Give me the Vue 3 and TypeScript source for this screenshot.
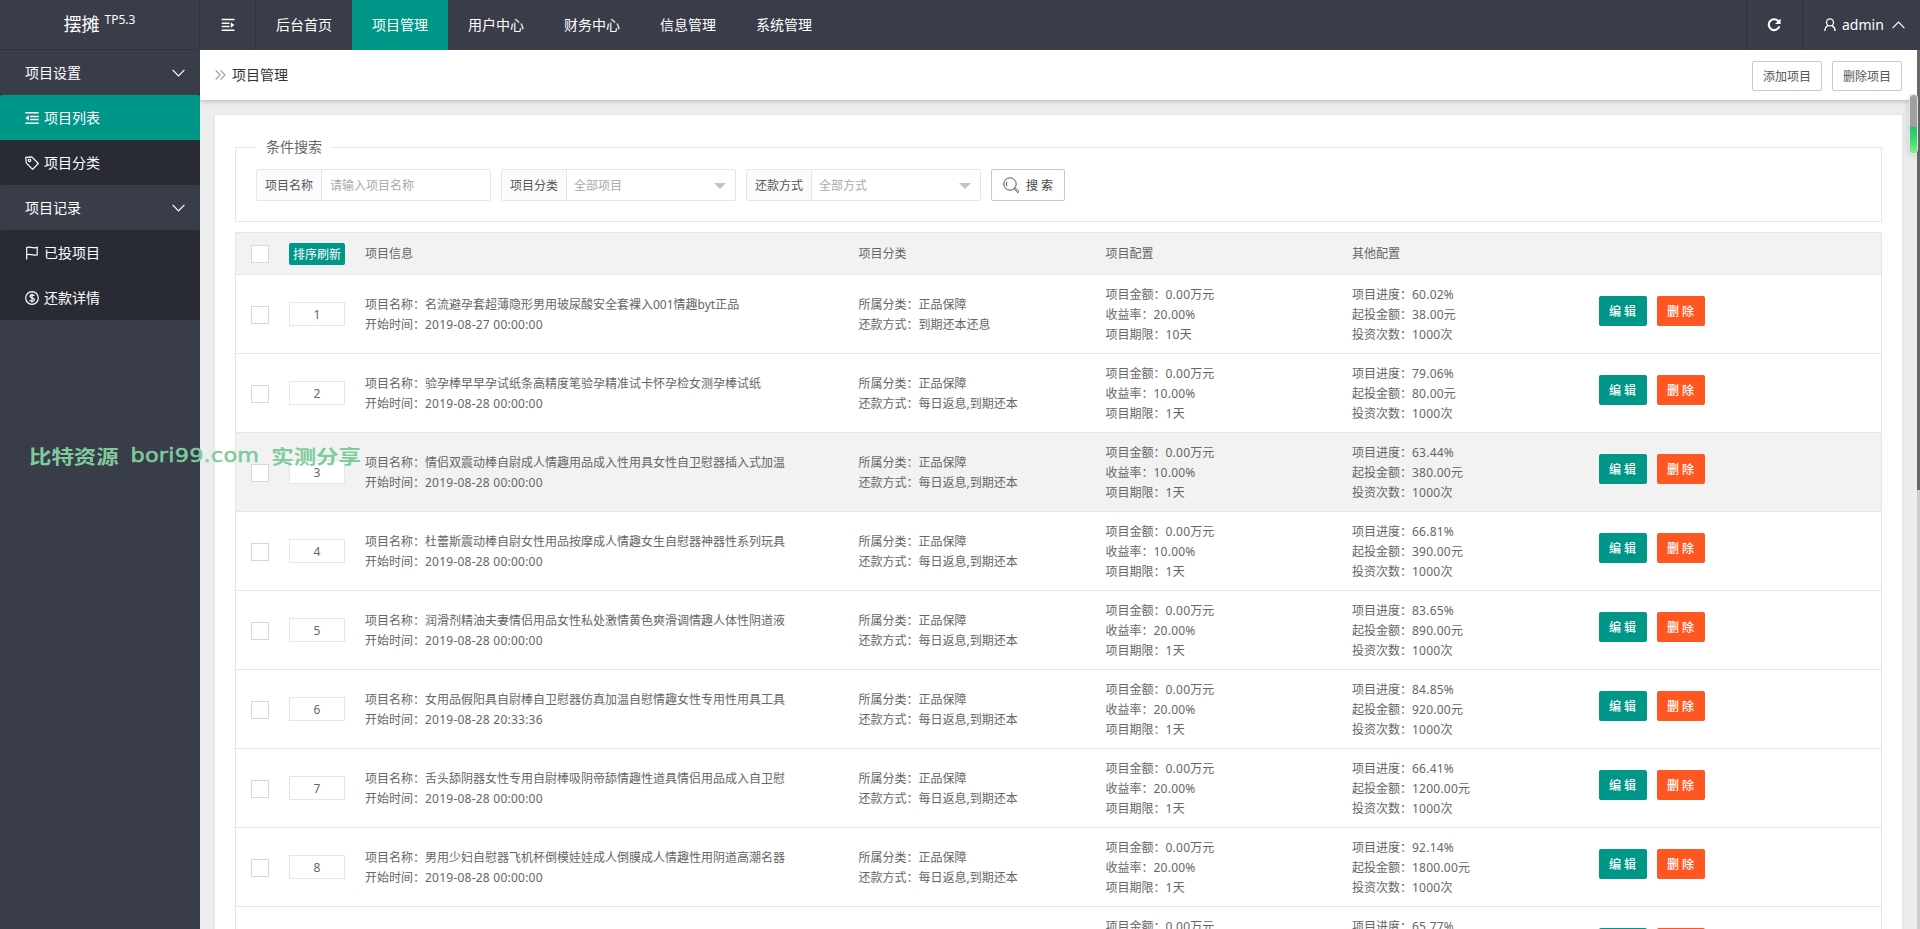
<script setup lang="ts">
interface MenuItem {
  label: string
  icon: 'list' | 'tag' | 'flag' | 'dollar'
  active?: boolean
}

interface MenuGroup {
  title: string
  items: MenuItem[]
}

interface Project {
  sort: number
  name: string
  start: string
  category: string
  repay: string
  amount: string
  rate: string
  term: string
  progress: string
  minimum: string
  times: string
  hover?: boolean
}

const navItems: string[] = ['后台首页', '项目管理', '用户中心', '财务中心', '信息管理', '系统管理']
const activeNav = '项目管理'

const groups: MenuGroup[] = [
  {
    title: '项目设置',
    items: [
      { label: '项目列表', icon: 'list', active: true },
      { label: '项目分类', icon: 'tag' },
    ],
  },
  {
    title: '项目记录',
    items: [
      { label: '已投项目', icon: 'flag' },
      { label: '还款详情', icon: 'dollar' },
    ],
  },
]

const selects = [
  { label: '项目分类', value: '全部项目' },
  { label: '还款方式', value: '全部方式' },
]

function project(
  sort: number,
  name: string,
  rate: string,
  progress: string,
  minimum: string,
  extra: Partial<Project> = {},
): Project {
  return {
    sort,
    name,
    rate,
    progress,
    minimum,
    start: '2019-08-28 00:00:00',
    category: '正品保障',
    repay: '每日返息,到期还本',
    amount: '0.00',
    term: '1',
    times: '1000',
    ...extra,
  }
}

const projects: Project[] = [
  project(1, '名流避孕套超薄隐形男用玻尿酸安全套裸入001情趣byt正品', '20.00%', '60.02%', '38.00', {
    start: '2019-08-27 00:00:00',
    repay: '到期还本还息',
    term: '10',
  }),
  project(2, '验孕棒早早孕试纸条高精度笔验孕精准试卡怀孕检女测孕棒试纸', '10.00%', '79.06%', '80.00'),
  project(3, '情侣双震动棒自尉成人情趣用品成入性用具女性自卫慰器插入式加温', '10.00%', '63.44%', '380.00', { hover: true }),
  project(4, '杜蕾斯震动棒自尉女性用品按摩成人情趣女生自慰器神器性系列玩具', '10.00%', '66.81%', '390.00'),
  project(5, '润滑剂精油夫妻情侣用品女性私处激情黄色爽滑调情趣人体性阴道液', '20.00%', '83.65%', '890.00'),
  project(6, '女用品假阳具自尉棒自卫慰器仿真加温自慰情趣女性专用性用具工具', '20.00%', '84.85%', '920.00', {
    start: '2019-08-28 20:33:36',
  }),
  project(7, '舌头舔阴器女性专用自尉棒吸阴帝舔情趣性道具情侣用品成入自卫慰', '20.00%', '66.41%', '1200.00'),
  project(8, '男用少妇自慰器飞机杯倒模娃娃成人倒膜成人情趣性用阴道高潮名器', '20.00%', '92.14%', '1800.00'),
]
</script>

<template>
  <div class="admin">
    <header class="topbar">
      <div class="logo">摆摊<sup>TP5.3</sup></div>
      <div class="cell">
        <svg width="14" height="14" viewBox="0 0 14 14" fill="none" stroke="#fff" stroke-width="1.5">
          <path d="M.7 1.500h12.800M.7 5.300h7.800M.7 8.600h7.800M.7 12.300h12.800" />
          <path d="M9.800 4.200 13.400 7 9.800 9.800z" fill="#fff" stroke="none" />
        </svg>
      </div>
      <nav class="nav">
        <a v-for="item in navItems" :key="item" :class="{ active: item === activeNav }">{{ item }}</a>
      </nav>
      <div class="cell refresh">
        <svg width="14" height="14" viewBox="0 0 14 14" fill="none" stroke="#fff" stroke-width="2">
          <path d="M11.600 3.600A5.400 5.400 0 1 0 12.300 8.400" />
          <path d="M13.600.6v5.500H8z" fill="#fff" stroke="none" />
        </svg>
      </div>
      <div class="user">
        <svg width="12" height="14" viewBox="0 0 12 14" fill="none" stroke="#fff" stroke-width="1.300">
          <circle cx="6" cy="4.400" r="3.500" />
          <path d="M4.300 7.400C2.400 8.300 .9 10 .8 13M7.700 7.400C9.600 8.300 10.900 9.600 11.200 13" />
        </svg>
        <span>admin</span>
        <svg class="caret" width="13" height="8" viewBox="0 0 13 8" fill="none" stroke="#fff" stroke-width="1.200">
          <path d="M.6 7.200 6.500 1.200l5.900 6" />
        </svg>
      </div>
    </header>

    <div class="body">
      <aside class="side">
        <section v-for="group in groups" :key="group.title">
          <div class="group-title">
            <span>{{ group.title }}</span>
            <svg width="13" height="8" viewBox="0 0 13 8" fill="none" stroke="#fff" stroke-width="1.200">
              <path d="M.6.8l5.900 6 5.900-6" />
            </svg>
          </div>
          <div class="group-list">
            <a v-for="item in group.items" :key="item.label" :class="{ active: item.active }">
              <svg width="14" height="14" viewBox="0 0 14 14" fill="none" stroke="#fff" stroke-width="1.200">
                <template v-if="item.icon === 'list'">
                  <path d="M.3 1.700h13.400M5 5.500h8.700M5 8.600h8.700M.3 12.300h13.400" stroke-width="1.500" />
                  <path d="M4 4.200.4 7 4 9.800z" fill="#fff" stroke="none" />
                </template>
                <template v-else-if="item.icon === 'tag'">
                  <path d="M.8 1.300 6.800.8l6.500 6.700-5.700 5.800L1.200 6.800z" stroke-linejoin="round" />
                  <circle cx="4.500" cy="4.300" r="1.300" />
                </template>
                <template v-else-if="item.icon === 'flag'">
                  <path d="M1.700 13.500V1.600c3-1.600 5.500 1.300 10.500-.2v7.400c-5 1.300-7.500-1.500-10.500 0" />
                </template>
                <template v-else>
                  <circle cx="7" cy="7" r="6.300" />
                  <path d="M9.300 4.900C8.600 3.300 4.900 3.400 4.900 5.300c0 2.200 4.500 1.100 4.500 3.400 0 2-4 2.100-4.800.3M7 2.500v9" />
                </template>
              </svg>
              <span>{{ item.label }}</span>
            </a>
          </div>
        </section>
      </aside>

      <main class="main">
        <div class="titlebar">
          <svg width="11" height="10" viewBox="0 0 11 10" fill="none" stroke="#999" stroke-width="1.100">
            <path d="M.7.4 5.200 5 .7 9.600M5.500.4 10 5 5.500 9.600" />
          </svg>
          <h1>项目管理</h1>
          <button type="button">添加项目</button>
          <button type="button">删除项目</button>
        </div>

        <div class="panel">
          <fieldset class="search">
            <legend>条件搜索</legend>
            <div class="filters">
              <label class="field">
                <span class="tag">项目名称</span>
                <input type="text" placeholder="请输入项目名称" />
              </label>
              <div v-for="select in selects" :key="select.label" class="field">
                <span class="tag">{{ select.label }}</span>
                <span class="choice">{{ select.value }}<i /></span>
              </div>
              <button type="button" class="find">
                <svg width="17" height="17" viewBox="0 0 17 17" fill="none" stroke="#555" stroke-width="1">
                  <circle cx="7" cy="7" r="6.200" />
                  <path d="M3.900 9.200a3.800 3.800 0 0 1 0-4.400" />
                  <path d="m11.200 11.700 1-.9 3.800 3.700-1.300 1.300z" />
                </svg>
                <span>搜 索</span>
              </button>
            </div>
          </fieldset>

          <div class="table">
            <div class="row head">
              <div class="check"><i /></div>
              <div class="sort"><button type="button">排序刷新</button></div>
              <div>项目信息</div>
              <div>项目分类</div>
              <div>项目配置</div>
              <div>其他配置</div>
              <div />
            </div>
            <div v-for="p in projects" :key="p.sort" class="row" :class="{ hover: p.hover }">
              <div class="check"><i /></div>
              <div class="sort"><input type="text" :value="p.sort" /></div>
              <div>
                <p>项目名称：{{ p.name }}</p>
                <p>开始时间：<b>{{ p.start }}</b></p>
              </div>
              <div>
                <p>所属分类：{{ p.category }}</p>
                <p>还款方式：{{ p.repay }}</p>
              </div>
              <div>
                <p>项目金额：<b>{{ p.amount }}</b>万元</p>
                <p>收益率：<b>{{ p.rate }}</b></p>
                <p>项目期限：<b>{{ p.term }}</b>天</p>
              </div>
              <div>
                <p>项目进度：<b>{{ p.progress }}</b></p>
                <p>起投金额：<b>{{ p.minimum }}</b>元</p>
                <p>投资次数：<b>{{ p.times }}</b>次</p>
              </div>
              <div class="ops">
                <button type="button" class="edit">编 辑</button>
                <button type="button" class="remove">删 除</button>
              </div>
            </div>
            <div class="row peek">
              <p class="peek-config">项目金额：<b>0.00</b>万元</p>
              <p>项目进度：<b>65.77%</b></p>
              <div class="ops">
                <button type="button" class="edit" />
                <button type="button" class="remove" />
              </div>
            </div>
          </div>
        </div>
      </main>
    </div>

    <div class="scrollbar"><i /></div>
    <div class="meter"><i /></div>
    <div class="watermark">
      <span>比特资源</span><span class="site">bori99.com</span><span>实测分享</span>
    </div>
  </div>
</template>

<style>
html,
body {
  overflow: hidden;
}
</style>

<style scoped>
* {
  box-sizing: border-box;
}

.admin {
  position: relative;
  display: flex;
  flex-direction: column;
  width: 1920px;
  height: 929px;
  overflow: hidden;
  color: #666;
  font: 12px/20px 'Noto Sans', 'Noto Sans CJK SC', sans-serif;
}

button,
input {
  font: inherit;
  outline: none;
}

p {
  margin: 0;
  white-space: nowrap;
}

b {
  font-weight: 400;
  letter-spacing: 0.230px;
}

.topbar {
  display: flex;
  flex: none;
  height: 50px;
  background: #393d49;
  color: #fff;
  font-size: 14px;
  line-height: 50px;
}

.logo {
  width: 200px;
  border-right: 1px solid #30333d;
  border-bottom: 1px solid #30333d;
  font-size: 18px;
  line-height: 48px;
  text-align: center;
}

.logo sup {
  display: inline-block;
  margin-left: 5px;
  font-size: 12px;
  line-height: 1;
  vertical-align: 7px;
}

.cell {
  display: flex;
  align-items: center;
  justify-content: center;
  width: 56px;
  border-right: 1px solid #30333d;
}

.nav {
  display: flex;
  flex: 1;
}

.nav a {
  width: 96px;
  text-align: center;
}

.nav .active {
  background: #009688;
}

.refresh {
  width: 57px;
  padding-right: 2px;
  border-left: 1px solid #30333d;
}

.user {
  display: flex;
  align-items: center;
  width: 117px;
  padding-left: 21px;
}

.user span {
  margin-left: 6px;
}

.user .caret {
  margin-left: 8px;
}

.body {
  display: flex;
  flex: 1;
  min-height: 0;
}

.side {
  flex: none;
  width: 200px;
  background: #393d49;
  color: #fff;
  font-size: 14px;
  line-height: 45px;
}

.group-title {
  display: flex;
  align-items: center;
  justify-content: space-between;
  height: 45px;
  padding: 0 15px 0 25px;
}

.group-list {
  overflow: hidden;
  background: #282b33;
  border-radius: 2px;
}

.group-list a {
  display: flex;
  align-items: center;
  gap: 5px;
  height: 45px;
  padding-left: 25px;
}

.group-list .active {
  background: #009688;
}

.main {
  flex: 1;
  min-width: 0;
  overflow: hidden;
  background: #ededed;
}

.titlebar {
  position: relative;
  display: flex;
  align-items: center;
  height: 50px;
  padding: 0 18px 0 15px;
  background: #fff;
  box-shadow: 0 1px 5px rgba(0, 0, 0, 0.25);
}

.titlebar h1 {
  flex: 1;
  margin: 0 0 0 6px;
  color: #333;
  font-size: 14px;
  font-weight: 400;
}

.titlebar button {
  width: 70px;
  height: 30px;
  margin: 2px 0 0 10px;
  padding: 2px 0 0;
  background: #fff;
  border: 1px solid #c9c9c9;
  border-radius: 2px;
  color: #555;
}

.panel {
  width: 1687px;
  margin: 15px 0 0 15px;
  padding: 20px 20px 0;
  background: #fff;
  box-shadow: 0 0 3px rgba(0, 0, 0, 0.08);
}

.search {
  height: 87px;
  margin: 0;
  padding: 10px 20px 0;
  border: 1px solid #e6e6e6;
}

.search legend {
  height: 24px;
  padding: 0 10px;
  font-size: 14px;
  line-height: 24px;
}

.filters {
  display: flex;
  gap: 10px;
}

.field {
  display: flex;
  width: 235px;
  height: 32px;
  border: 1px solid #e6e6e6;
  border-radius: 2px;
  line-height: 30px;
}

.tag {
  width: 65px;
  padding-top: 1px;
  border-right: 1px solid #e6e6e6;
  background: #fbfbfb;
  color: #555;
  line-height: 29px;
  text-align: center;
}

.field input {
  flex: 1;
  min-width: 0;
  padding: 2px 8px 0;
  background: none;
  border: 0;
}

.field input::placeholder {
  color: #aaa;
}

.choice {
  display: flex;
  flex: 1;
  align-items: center;
  justify-content: space-between;
  padding: 1px 9px 0 7px;
  color: #aaa;
  line-height: 29px;
}

.choice i {
  border: 6px solid transparent;
  border-top-color: #c2c2c2;
  border-bottom: 0;
}

.find {
  display: flex;
  align-items: center;
  gap: 6px;
  width: 74px;
  height: 32px;
  padding: 0 0 0 11px;
  background: #fff;
  border: 1px solid #c9c9c9;
  border-radius: 2px;
  color: #444;
}

.find span {
  padding-top: 2px;
}

.table {
  margin-top: 10px;
  border: 1px solid #e6e6e6;
}

.row {
  display: grid;
  grid-template-columns: 53px 76px 493.500px 247px 246.500px 246.500px 1fr;
  align-items: center;
  height: 79px;
  border-bottom: 1px solid #e6e6e6;
}

.row:not(.head) p {
  position: relative;
  top: 1px;
}

.head {
  height: 42px;
  background: #f2f2f2;
}

.head .check {
  padding-top: 1px;
}

.hover {
  background: #f2f2f2;
}

.check {
  padding-left: 15px;
}

.check i {
  display: block;
  width: 18px;
  height: 18px;
  background: #fff;
  border: 1px solid #d8d8d8;
}

.row:not(.head) .check i {
  margin-top: 2px;
}

.sort input,
.sort button {
  display: block;
  width: 56px;
  padding: 0;
  text-align: center;
}

.sort input {
  height: 24px;
  background: #fff;
  border: 1px solid #e6e6e6;
  color: #666;
}

.sort button {
  height: 22px;
  padding-top: 2px;
  background: #009688;
  border: 0;
  border-radius: 2px;
  color: #fff;
}

.ops {
  display: flex;
  gap: 10px;
  margin-top: -6px;
}

.ops button {
  width: 48px;
  height: 30px;
  padding: 2px 0 0;
  border: 0;
  border-radius: 2px;
  color: #fff;
  font-weight: 500;
}

.ops .edit {
  background: #009688;
}

.ops .remove {
  background: #ff5722;
}

.peek {
  align-items: start;
  padding-top: 9px;
  border-bottom: 0;
}

.peek-config {
  grid-column: 5;
}

.peek .ops {
  margin-top: 12px;
}

.scrollbar {
  position: absolute;
  top: 50px;
  right: 0;
  width: 3px;
  height: 879px;
  background: #cdcdcd;
}

.scrollbar i {
  display: block;
  height: 440px;
  background: #666867;
}

.meter {
  position: absolute;
  top: 95px;
  left: 1910px;
  width: 7px;
  height: 58px;
  overflow: hidden;
  background: #a0a0a0;
  border-radius: 4px;
  box-shadow: 0 0 0 1px #e4e4e4, 0 2px 8px rgba(0, 0, 0, 0.2);
}

.meter i {
  display: block;
  height: 26px;
  margin-top: 32px;
  background: linear-gradient(#1fc46b, #3dd673 50%, #84f57f);
}

.watermark {
  position: absolute;
  top: 439px;
  left: 29px;
  display: flex;
  gap: 12px;
  color: #7fcb9c;
  font: 700 22.400px/32px 'Noto Sans CJK SC', sans-serif;
  white-space: nowrap;
  transform: scaleY(0.86);
}

.watermark .site {
  font-family: 'DejaVu Sans', sans-serif;
  font-weight: 400;
  letter-spacing: 0.200px;
  -webkit-text-stroke: 0.600px #7fcb9c;
}
</style>
